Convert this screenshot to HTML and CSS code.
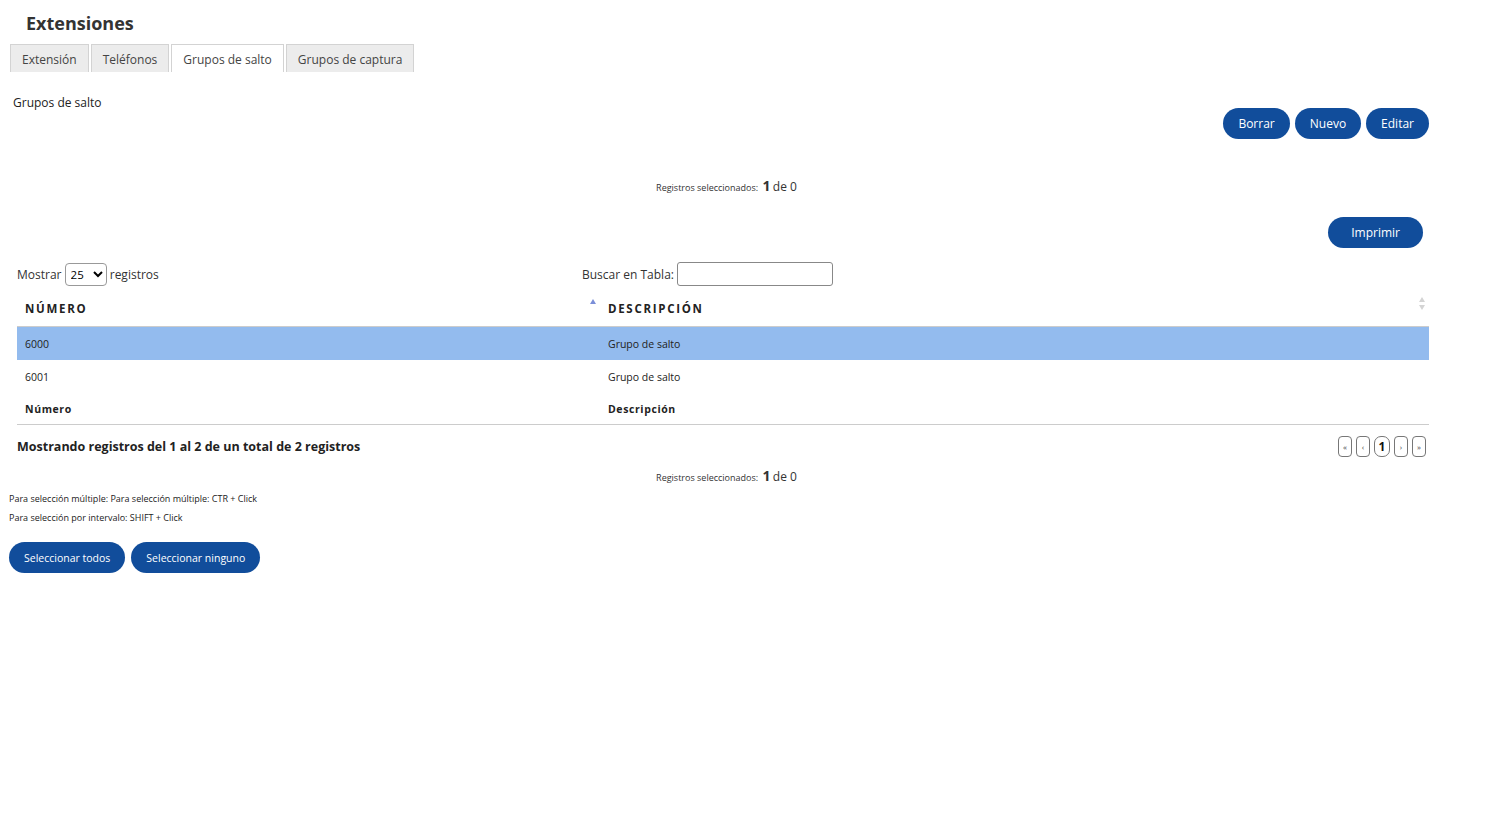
FILE: index.html
```html
<!DOCTYPE html>
<html lang="es">
<head>
  <meta charset="UTF-8">
  <title>Extensiones</title>
  <link rel="stylesheet" href="styles.css">
</head>
<body>
  <div class="page">
    <h2 class="page-title">Extensiones</h2>

    <div class="tabs">
      <a class="tab">Extensión</a>
      <a class="tab">Teléfonos</a>
      <a class="tab active">Grupos de salto</a>
      <a class="tab">Grupos de captura</a>
    </div>

    <div class="section">
      <div class="section-head">
        <div class="section-name">Grupos de salto</div>
        <div class="actions">
          <button class="pill">Borrar</button>
          <button class="pill">Nuevo</button>
          <button class="pill">Editar</button>
        </div>
      </div>

      <div class="selected-info">Registros seleccionados: <b>1</b> <span>de 0</span></div>

      <div class="print-row">
        <button class="pill print-btn">Imprimir</button>
      </div>

      <div class="table-wrap">
        <div class="table-tools">
          <label class="length">Mostrar
            <select>
              <option>25</option>
            </select>
            registros</label>
          <label class="search">Buscar en Tabla: <input type="text"></label>
        </div>

        <table class="grid">
          <thead>
            <tr>
              <th class="col-num sort-asc">NÚMERO</th>
              <th class="sort-both">DESCRIPCIÓN</th>
            </tr>
          </thead>
          <tbody>
            <tr class="selected">
              <td>6000</td>
              <td>Grupo de salto</td>
            </tr>
            <tr>
              <td>6001</td>
              <td>Grupo de salto</td>
            </tr>
          </tbody>
          <tfoot>
            <tr>
              <th>Número</th>
              <th>Descripción</th>
            </tr>
          </tfoot>
        </table>

        <div class="table-bottom">
          <div class="info">Mostrando registros del 1 al 2 de un total de 2 registros</div>
          <div class="pager">
            <span class="pg">«</span>
            <span class="pg">‹</span>
            <span class="pg current">1</span>
            <span class="pg">›</span>
            <span class="pg">»</span>
          </div>
        </div>
      </div>

      <div class="selected-info bottom">Registros seleccionados: <b>1</b> <span>de 0</span></div>
    </div>

    <p class="hint">Para selección múltiple: Para selección múltiple: CTR + Click</p>
    <p class="hint">Para selección por intervalo: SHIFT + Click</p>

    <div class="select-buttons">
      <button class="pill">Seleccionar todos</button>
      <button class="pill">Seleccionar ninguno</button>
    </div>
  </div>
</body>
</html>
```

FILE: styles.css
```css
body {
  margin: 0;
  font-family: "Open Sans", "Noto Sans", sans-serif;
  color: #222;
  background: white;
}
.page {
  width: 1435px;
  padding-left: 9px;
}
.page-title {
  margin: 0;
  padding: 11px 0 0 17px;
  height: 33px;
  font-size: 18px;
  font-weight: bold;
  color: #333;
}
.tabs {
  display: flex;
  gap: 2px;
  padding-left: 1px;
}
.tab {
  display: block;
  padding: 0 11px;
  height: 28px;
  line-height: 29px;
  font-size: 12px;
  color: #444;
  background: #ececec;
  border: 1px solid #d3d3d3;
  border-bottom: none;
  box-sizing: border-box;
  cursor: pointer;
}
.tab.active {
  background: white;
}
.section {
  padding: 0 4px;
}
.section-head {
  display: flex;
  justify-content: space-between;
  padding-top: 21px;
}
.section-name {
  font-size: 12px;
  margin-top: 1px;
}
.actions {
  display: flex;
  gap: 5px;
  margin-top: 15px;
  margin-right: 11px;
}
.pill {
  height: 31px;
  padding: 0 15px;
  border: none;
  border-radius: 16px;
  background: #114d9b;
  color: white;
  font-family: inherit;
  font-size: 12px;
  cursor: pointer;
}
.selected-info {
  text-align: center;
  font-size: 9px;
  color: #333;
  margin-top: 37px;
}
.selected-info b {
  font-size: 14px;
  margin-left: 2px;
}
.selected-info span {
  font-size: 12px;
}
.print-row {
  display: flex;
  justify-content: flex-end;
  padding-right: 17px;
  margin-top: 22px;
}
.print-btn {
  padding: 0 23px;
}
.table-wrap {
  padding: 0 11px 0 4px;
}
.table-tools {
  display: flex;
  align-items: center;
  margin-top: 14px;
  font-size: 12px;
  color: #333;
}
.length {
  width: 565px;
}
.length select {
  width: 42px;
  height: 23px;
  font-family: inherit;
  font-size: 11.5px;
  border: 1px solid #999;
  border-radius: 4px;
  background: white;
  padding: 0 1px;
}
.search {
  display: flex;
  align-items: center;
  gap: 3px;
}
.search input {
  width: 156px;
  height: 24px;
  box-sizing: border-box;
  border: 1px solid #888;
  border-radius: 3px;
}
.grid {
  width: 100%;
  border-collapse: collapse;
  margin-top: 5px;
}
.grid th,
.grid td {
  text-align: left;
  padding: 0 8px;
  height: 32px;
}
.grid thead th {
  height: 35px;
  font-size: 11.5px;
  letter-spacing: 1.7px;
  color: #222;
  border-bottom: 1px solid #ccc;
  position: relative;
}
.grid .col-num {
  width: 567px;
}
.sort-asc::after {
  content: "";
  position: absolute;
  right: 4px;
  top: 5px;
  border: 3px solid transparent;
  border-bottom: 5px solid #7b8fd8;
}
.sort-both::before,
.sort-both::after {
  content: "";
  position: absolute;
  right: 4px;
  border: 3.5px solid transparent;
}
.sort-both::before {
  top: 3px;
  border-bottom: 5px solid #d4d4d4;
}
.sort-both::after {
  top: 14px;
  border-top: 5px solid #d4d4d4;
}
.grid td {
  font-size: 10.5px;
  color: #222;
  height: 33px;
}
.grid tr.selected td {
  background: #93bbee;
}
.grid tfoot th {
  height: 31px;
  font-size: 10.5px;
  letter-spacing: 0.6px;
  border-bottom: 1px solid #ccc;
}
.table-bottom {
  display: flex;
  justify-content: space-between;
  align-items: center;
  margin-top: 11px;
}
.info {
  font-size: 12.5px;
  font-weight: bold;
}
.pager {
  display: flex;
  gap: 4px;
  margin-right: 3px;
}
.pg {
  width: 14px;
  height: 21px;
  box-sizing: border-box;
  border: 1px solid #777;
  border-radius: 4px;
  font-size: 8px;
  line-height: 19px;
  text-align: center;
  color: #444;
}
.pg.current {
  width: 16px;
  border-radius: 7px;
  font-size: 12px;
  font-weight: bold;
  color: #111;
}
.selected-info.bottom {
  margin-top: 9px;
}
.hint {
  margin: 7px 0 0;
  font-size: 9px;
  color: #222;
}
.hint + .hint {
  margin-top: 6px;
}
.select-buttons {
  display: flex;
  gap: 6px;
  margin-top: 18px;
}
.select-buttons .pill {
  font-size: 10.5px;
}
```
